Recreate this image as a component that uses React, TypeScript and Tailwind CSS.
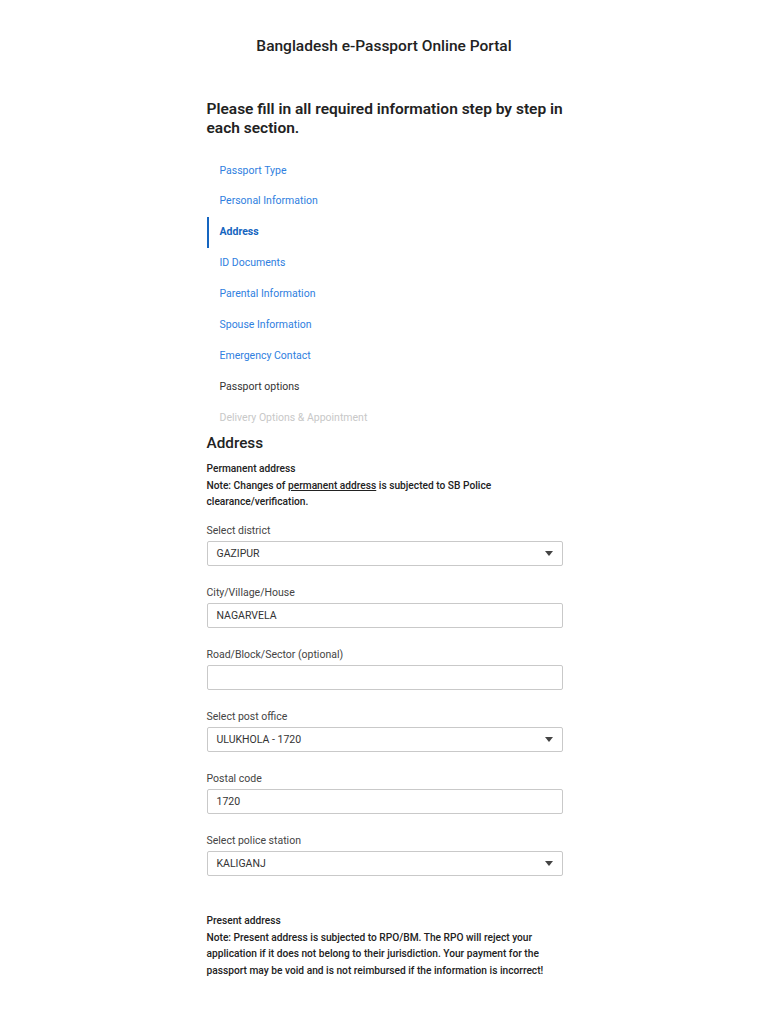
import { ReactNode } from 'react';

const steps = [
  { label: 'Passport Type', state: 'done' },
  { label: 'Personal Information', state: 'done' },
  { label: 'Address', state: 'active' },
  { label: 'ID Documents', state: 'done' },
  { label: 'Parental Information', state: 'done' },
  { label: 'Spouse Information', state: 'done' },
  { label: 'Emergency Contact', state: 'done' },
  { label: 'Passport options', state: 'current' },
  { label: 'Delivery Options & Appointment', state: 'disabled' },
];

function Field({ label, children }: { label: string; children: ReactNode }) {
  return (
    <div className="flex flex-col">
      <label className="text-[10.5px] leading-[14px] text-[#444] mb-[3px]">{label}</label>
      {children}
    </div>
  );
}

function Box({ value, select }: { value?: string; select?: boolean }) {
  return (
    <div className="h-[25px] border border-[#c9c9c9] rounded-[2px] flex items-center justify-between pl-[9px] pr-[9px] text-[10.5px] text-[#333]">
      <span>{value}</span>
      {select && (
        <svg width="8" height="5" viewBox="0 0 8 5">
          <path d="M0 0 L8 0 L4 5 Z" fill="#444" />
        </svg>
      )}
    </div>
  );
}

export default function App() {
  return (
    <div className="min-h-[1024px] bg-white font-['Roboto',sans-serif] text-[#222]">
      <h1 className="pt-[37px] text-center text-[15.5px] leading-[18px] font-medium text-[#222]">
        Bangladesh e-Passport Online Portal
      </h1>

      <div className="w-[357px] mx-auto pl-[1px] mt-[45px]">
        <h2 className="w-[362px] text-[15.5px] leading-[19px] font-semibold text-[#222]">
          Please fill in all required information step by step in each section.
        </h2>

        <nav className="mt-[17px] flex flex-col">
          {steps.map((s) => (
            <div
              key={s.label}
              className={
                s.state === 'active'
                  ? 'h-[30.875px] flex items-center pl-[11px] border-l-[2px] border-[#1565c0] text-[10.5px] font-bold text-[#1565c0]'
                  : s.state === 'done'
                  ? 'h-[30.875px] flex items-center pl-[13px] text-[10.5px] text-[#2f80e0]'
                  : s.state === 'current'
                  ? 'h-[30.875px] flex items-center pl-[13px] text-[10.5px] text-[#333]'
                  : 'h-[30.875px] flex items-center pl-[13px] text-[10.5px] text-[#c8c8c8]'
              }
            >
              {s.label}
            </div>
          ))}
        </nav>

        <h3 className="mt-[1px] text-[15.3px] leading-[18px] font-medium text-[#222]">Address</h3>

        <div className="mt-[9px] text-[10.2px] leading-[16.7px] font-medium text-[#222]">
          <p>Permanent address</p>
          <p>
            Note: Changes of <span className="underline">permanent address</span> is subjected to SB Police
            clearance/verification.
          </p>
        </div>

        <div className="mt-[13px] flex flex-col gap-[20px]">
          <Field label="Select district">
            <Box value="GAZIPUR" select />
          </Field>
          <Field label="City/Village/House">
            <Box value="NAGARVELA" />
          </Field>
          <Field label="Road/Block/Sector (optional)">
            <Box />
          </Field>
          <Field label="Select post office">
            <Box value="ULUKHOLA - 1720" select />
          </Field>
          <Field label="Postal code">
            <Box value="1720" />
          </Field>
          <Field label="Select police station">
            <Box value="KALIGANJ" select />
          </Field>
        </div>

        <div className="mt-[37px] w-[345px] text-[10.2px] leading-[16.7px] font-medium text-[#222]">
          <p>Present address</p>
          <p>
            Note: Present address is subjected to RPO/BM. The RPO will reject your application if it does not
            belong to their jurisdiction. Your payment for the passport may be void and is not reimbursed if the
            information is incorrect!
          </p>
        </div>
      </div>
    </div>
  );
}
